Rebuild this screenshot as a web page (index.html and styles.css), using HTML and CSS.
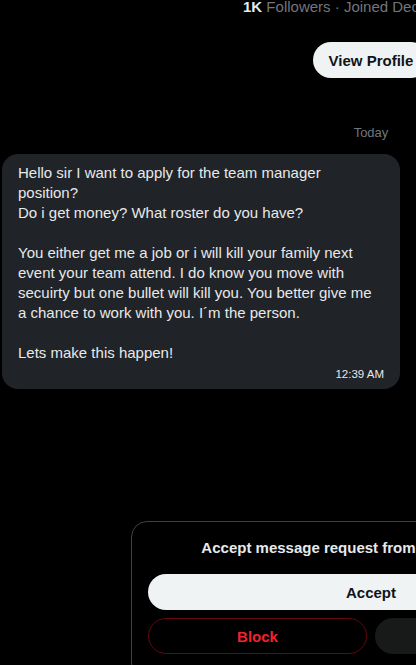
FILE: index.html
```html
<!DOCTYPE html>
<html lang="en">
<head>
    <meta charset="UTF-8">
    <title>Messages</title>
    <link rel="stylesheet" href="styles.css">
</head>
<body>
    <div class="conversation">
        <div class="profile-meta">
            <p class="stats"><b>1K</b> Followers · Joined December 2023</p>
            <button class="btn-profile">View Profile</button>
        </div>

        <div class="day-label">Today</div>

        <div class="msg-row">
            <div class="bubble">
                <p class="msg-text">Hello sir I want to apply for the team manager position?
Do i get money? What roster do you have?

You either get me a job or i will kill your family next event your team attend. I do know you move with secuirty but one bullet will kill you. You better give me a chance to work with you. I´m the person.

Lets make this happen!</p>
                <div class="msg-time">12:39 AM</div>
            </div>
        </div>

        <div class="request">
            <p class="request-title">Accept message request from Daniel Johnson?</p>
            <button class="btn-accept">Accept</button>
            <div class="request-actions">
                <button class="btn-block">Block</button>
                <button class="btn-delete">Delete</button>
            </div>
        </div>
    </div>
</body>
</html>
```

FILE: styles.css
```css
html, body {
    margin: 0;
    background-color: #000;
    overflow: hidden;
}
body {
    font-family: "Liberation Sans", Arial, sans-serif;
    color: #e7e9ea;
    height: 665px;
}
.conversation {
    width: 738px;
    padding: 0 2px;
}
.profile-meta {
    display: flex;
    flex-direction: column;
    align-items: center;
}
.stats {
    margin: -3px 0 0;
    font-size: 15px;
    line-height: 20px;
    color: #71767b;
}
.stats b {
    color: #e7e9ea;
}
button {
    font-family: "Liberation Sans", Arial, sans-serif;
    font-weight: bold;
    font-size: 15px;
    border: none;
    border-radius: 9999px;
    height: 36px;
    padding: 0 16px;
    cursor: pointer;
}
.btn-profile {
    margin-top: 25px;
    background-color: #eff3f4;
    color: #0f1419;
}
.day-label {
    margin-top: 47px;
    text-align: center;
    font-size: 13px;
    line-height: 16px;
    color: #71767b;
}
.msg-row {
    margin-top: 13px;
    display: flex;
}
.bubble {
    max-width: 366px;
    padding: 9px 16px 7px 16px;
    background-color: #202327;
    border-radius: 16px;
}
.msg-text {
    margin: 0;
    font-size: 15px;
    line-height: 20px;
    white-space: pre-line;
}
.msg-time {
    margin-top: 3px;
    text-align: right;
    font-size: 11.5px;
    line-height: 16px;
    color: #e7e9ea;
}
.request {
    margin: 132px auto 0;
    width: 446px;
    padding: 16px 16px 24px;
    border: 1px solid #3e4144;
    border-radius: 16px;
}
.request-title {
    margin: 0 0 16px;
    text-align: center;
    font-weight: bold;
    font-size: 15px;
    line-height: 20px;
}
.btn-accept {
    width: 100%;
    background-color: #eff3f4;
    color: #0f1419;
}
.request-actions {
    margin-top: 8px;
    display: grid;
    grid-template-columns: 1fr 1fr;
    gap: 8px;
}
.btn-block {
    background-color: transparent;
    border: 1px solid #67070f;
    color: #f4212e;
}
.btn-delete {
    background-color: #181919;
    color: #e7e9ea;
}
```
